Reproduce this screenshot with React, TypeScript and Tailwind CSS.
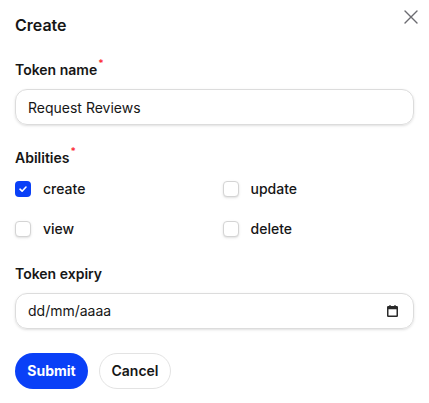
import { useState } from 'react';

type Ability = 'create' | 'update' | 'view' | 'delete';

const abilities: Ability[] = ['create', 'update', 'view', 'delete'];

function Label({ children, required }: { children: string; required?: boolean }) {
    return (
        <label className="flex items-start text-sm leading-5 font-semibold text-[#161616]">
            {children}
            {required && <span className="ml-px -mt-[3px] text-[10px] leading-3 text-red-500">*</span>}
        </label>
    );
}

function CheckIcon() {
    return (
        <svg width="10" height="10" viewBox="0 0 10 10" fill="none">
            <path d="M2 5.2 4.1 7.2 8 3" stroke="white" strokeWidth="1.6" strokeLinecap="round" strokeLinejoin="round" />
        </svg>
    );
}

export default function App() {
    const [name, setName] = useState('Request Reviews');
    const [checked, setChecked] = useState<Record<Ability, boolean>>({
        create: true,
        update: false,
        view: false,
        delete: false,
    });

    return (
        <div
            className="w-[429px] h-[403px] bg-white px-[15px] pt-[13px]"
            style={{ fontFamily: 'Inter, "Noto Sans", sans-serif' }}
        >
            <div className="flex items-start justify-between">
                <h2 className="text-base leading-6 font-semibold text-[#161616]">Create</h2>
                <button className="mt-[-3px] mr-[-4px] p-0 text-[#6b6b70]" title="Close">
                    <svg width="14" height="14" viewBox="0 0 14 14" fill="none">
                        <path d="M1 1 13 13M13 1 1 13" stroke="currentColor" strokeWidth="1.4" strokeLinecap="round" />
                    </svg>
                </button>
            </div>

            <div className="mt-[23px]">
                <Label required>Token name</Label>
                <input
                    value={name}
                    onChange={(e) => setName(e.target.value)}
                    className="mt-[9px] block h-9 w-full rounded-xl border border-[#dcdcdc] px-3 text-sm text-[#161616] shadow-sm outline-none"
                />
            </div>

            <div className="mt-[23px]">
                <Label required>Abilities</Label>
                <div className="mt-[11px] grid grid-cols-2 gap-x-4 gap-y-5">
                    {abilities.map((a) => (
                        <label key={a} className="flex h-5 items-center gap-3 text-sm text-[#161616] font-medium">
                            <button
                                onClick={() => setChecked({ ...checked, [a]: !checked[a] })}
                                className={
                                    checked[a]
                                        ? 'flex h-4 w-4 items-center justify-center rounded-[4px] bg-[#0a40f7]'
                                        : 'flex h-4 w-4 items-center justify-center rounded-[4px] border border-[#d4d4d4] bg-white shadow-sm'
                                }
                            >
                                {checked[a] && <CheckIcon />}
                            </button>
                            {a}
                        </label>
                    ))}
                </div>
            </div>

            <div className="mt-[25px]">
                <Label>Token expiry</Label>
                <div className="mt-[9px] flex h-9 w-full items-center justify-between rounded-xl border border-[#dcdcdc] pl-3 pr-[15px] text-sm text-[#161616] shadow-sm">
                    <span>dd/mm/aaaa</span>
                    <svg width="11" height="12" viewBox="0 0 11 12" fill="none">
                        <rect x="0.75" y="1.75" width="9.5" height="9.5" rx="0.5" stroke="#2a2a2a" strokeWidth="1.5" />
                        <rect x="0.75" y="1.75" width="9.5" height="2.5" fill="#2a2a2a" />
                        <path d="M3 0v2M8 0v2" stroke="#2a2a2a" strokeWidth="1.2" />
                    </svg>
                </div>
            </div>

            <div className="mt-6 flex gap-[11px]">
                <button className="h-9 w-[73px] rounded-full bg-[#0a40f7] text-sm font-bold text-white">Submit</button>
                <button className="h-9 w-[72px] rounded-full border border-[#e3e3e3] bg-white text-sm font-semibold text-[#161616]">
                    Cancel
                </button>
            </div>
        </div>
    );
}
